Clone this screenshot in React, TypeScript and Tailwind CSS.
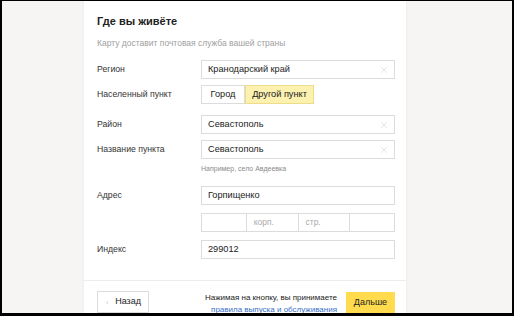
import { X, ChevronLeft } from 'lucide-react'

const font = { fontFamily: '"Liberation Sans", Arial, sans-serif' }

function Field({ value, clear }: { value: string; clear?: boolean }) {
  return (
    <div className="flex items-center w-[194px] h-[19px] border border-[#dcdcdc] bg-white pl-[6px] pr-[5px]">
      <span className="flex-1 text-[9.2px] text-[#222]">{value}</span>
      {clear && <X size={10} strokeWidth={1.2} className="text-[#c8c8c8]" />}
    </div>
  )
}

function Row({ label, children, className = '' }: { label: string; children: React.ReactNode; className?: string }) {
  return (
    <div className={`flex items-center ${className}`}>
      <div className="w-[104px] text-[8.7px] text-[#333]">{label}</div>
      {children}
    </div>
  )
}

export default function App() {
  return (
    <div className="w-[514px] h-[316px] bg-black pt-[1px] px-[2px] pb-[3px]" style={font}>
      <div className="h-full bg-[#f6f5f3] flex justify-start overflow-hidden pl-[82px]">
        <div className="w-[322px] h-full bg-white shadow-[0_0_3px_rgba(0,0,0,0.06)] flex flex-col">
          <div className="pl-[13px] pr-[11px] pt-[12px] pb-[21px]">
            <h1 className="text-[11px] font-bold text-[#222] leading-[16px]">Где вы живёте</h1>
            <p className="mt-[8px] text-[8.5px] text-[#a0a0a0] leading-[12px]">Карту доставит почтовая служба вашей страны</p>

            <Row label="Регион" className="mt-[11px]">
              <Field value="Кранодарский край" clear />
            </Row>

            <Row label="Населенный пункт" className="mt-[6px]">
              <div className="flex h-[19px] text-[9.2px]">
                <div className="flex items-center justify-center w-[44px] border border-[#dcdcdc] text-[#222]">Город</div>
                <div className="flex items-center justify-center w-[69px] border border-[#eddc8a] bg-[#fdf1b0] text-[#222]">Другой пункт</div>
              </div>
            </Row>

            <Row label="Район" className="mt-[11px]">
              <Field value="Севастополь" clear />
            </Row>

            <Row label="Название пункта" className="mt-[6px]">
              <Field value="Севастополь" clear />
            </Row>
            <div className="ml-[104px] mt-[5px] text-[7px] text-[#8a8a8a] leading-[10px]">Например, село Авдеевка</div>

            <Row label="Адрес" className="mt-[12px]">
              <Field value="Горпищенко" />
            </Row>

            <div className="ml-[104px] mt-[8px] flex w-[194px] h-[19px] border border-[#dcdcdc] text-[8.5px] text-[#aaa]">
              <div className="flex-1 border-r border-[#dcdcdc]" />
              <div className="flex-1 border-r border-[#dcdcdc] flex items-center pl-[7px]">корп.</div>
              <div className="flex-1 border-r border-[#dcdcdc] flex items-center pl-[7px]">стр.</div>
              <div className="flex-1" />
            </div>

            <Row label="Индекс" className="mt-[8px]">
              <Field value="299012" />
            </Row>
          </div>

          <div className="border-t border-[#ececec] flex items-start pl-[13px] pr-[11px] pt-[10px]">
            <div className="flex items-center gap-[6px] w-[52px] h-[22px] px-[7px] border border-[#dcdcdc] text-[9px] text-[#222]">
              <ChevronLeft size={9} strokeWidth={1.3} />
              <span>Назад</span>
            </div>
            <div className="flex-1 text-right pr-[9px] text-[8px] leading-[12px] pt-[1px]">
              <div className="text-[#222]">Нажимая на кнопку, вы принимаете</div>
              <div className="text-[#3a70c8]">правила выпуска и обслуживания</div>
            </div>
            <div className="flex items-center justify-center w-[49px] h-[21px] mt-[1px] bg-[#ffdb4d] text-[9px] text-[#222]">Дальше</div>
          </div>
        </div>
      </div>
    </div>
  )
}
